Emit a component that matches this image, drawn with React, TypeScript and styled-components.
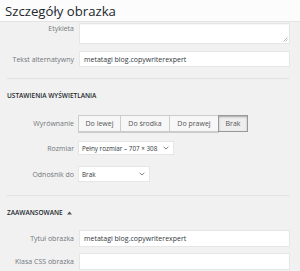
import React from "react";
import styled, { createGlobalStyle } from "styled-components";

const Global = createGlobalStyle`
  html, body { margin: 0; padding: 0; background: #f1f1f1; }
  body { font-family: "Open Sans", "Noto Sans", sans-serif; color: #444; }
  * { box-sizing: border-box; }
`;

const Page = styled.div`
  width: 300px;
  height: 271px;
  overflow: hidden;
  background: #f1f1f1;
`;

const Header = styled.div`
  height: 22px;
  background: #fcfcfc;
  border-bottom: 1px solid #e3e3e3;
  padding-left: 5px;
  display: flex;
  align-items: center;
`;

const Title = styled.h1`
  margin: 0;
  font-size: 13.2px;
  font-weight: 500;
  color: #23282d;
`;

const Body = styled.div`
  padding: 0 10px 0 7px;
  display: flex;
  flex-direction: column;
`;

const Row = styled.div<{ $mt: number; $align?: string }>`
  display: grid;
  grid-template-columns: 67px 1fr;
  column-gap: 4px;
  align-items: ${(p) => p.$align || "center"};
  margin-top: ${(p) => p.$mt}px;
`;

const Label = styled.label<{ $pt?: number }>`
  text-align: right;
  font-size: 7px;
  color: #72777c;
  padding-top: ${(p) => p.$pt || 0}px;
  white-space: nowrap;
`;

const TextArea = styled.div`
  position: relative;
  height: 21px;
  margin-left: 1px;
  background: #fff;
  border: 1px solid #e6e6e6;
  box-shadow: inset 0 1px 1px rgba(0, 0, 0, 0.04);
`;

const Grip = styled.svg`
  position: absolute;
  right: 1px;
  bottom: 1px;
`;

const Input = styled.div<{ $h: number }>`
  height: ${(p) => p.$h}px;
  margin-left: 1px;
  background: #fff;
  border: 1px solid #e6e6e6;
  display: flex;
  align-items: center;
  padding-left: 4px;
  font-size: 7px;
  color: #32373c;
`;

const Separator = styled.hr<{ $mt: number }>`
  margin: ${(p) => p.$mt}px 1px 0 0;
  border: 0;
  border-top: 1px solid #e2e2e2;
  height: 0;
`;

const Heading = styled.h2<{ $mt: number }>`
  margin: ${(p) => p.$mt}px 0 0;
  font-size: 6.5px;
  font-weight: 600;
  color: #23282d;
  text-transform: uppercase;
  display: flex;
  align-items: center;
  gap: 4px;
  line-height: 9px;
`;

const ButtonGroup = styled.div`
  display: flex;
  height: 17px;
`;

const SegButton = styled.button<{ $w: number; $active?: boolean }>`
  width: ${(p) => p.$w}px;
  height: 17px;
  margin: 0 0 0 -1px;
  padding: 0;
  font-family: inherit;
  font-size: 7px;
  color: #555;
  background: ${(p) => (p.$active ? "#eee" : "#f7f7f7")};
  border: 1px solid ${(p) => (p.$active ? "#999" : "#ccc")};
  box-shadow: ${(p) =>
    p.$active ? "inset 0 1px 2px rgba(0,0,0,0.3)" : "0 1px 0 #ccc"};
  position: relative;
  z-index: ${(p) => (p.$active ? 1 : 0)};
  &:first-child { margin-left: 0; }
`;

const Select = styled.div<{ $w: number; $h: number }>`
  width: ${(p) => p.$w}px;
  height: ${(p) => p.$h}px;
  background: #fff;
  border: 1px solid #e6e6e6;
  display: flex;
  align-items: center;
  justify-content: space-between;
  padding: 0 4px 0 3px;
  font-size: 6.3px;
  color: #32373c;
`;

const Chevron = () => (
  <svg width="6" height="4" viewBox="0 0 6 4">
    <path d="M0.6 0.8 L3 3 L5.4 0.8" fill="none" stroke="#777" strokeWidth="0.9" />
  </svg>
);

export default function App() {
  return (
    <Page>
      <Global />
      <Header>
        <Title>Szczegóły obrazka</Title>
      </Header>
      <Body>
        <Row $mt={1} $align="start">
          <Label $pt={1}>Etykieta</Label>
          <TextArea>
            <Grip width="5" height="5" viewBox="0 0 5 5">
              <path d="M4.5 0.5 L0.5 4.5 M4.5 2.5 L2.5 4.5" stroke="#aaa" strokeWidth="0.8" />
            </Grip>
          </TextArea>
        </Row>
        <Row $mt={7}>
          <Label>Tekst alternatywny</Label>
          <Input $h={16}>metatagi blog.copywriterexpert</Input>
        </Row>
        <Separator $mt={11} />
        <Heading $mt={12}>Ustawienia wyświetlania</Heading>
        <Row $mt={15}>
          <Label>Wyrównanie</Label>
          <ButtonGroup>
            <SegButton $w={43}>Do lewej</SegButton>
            <SegButton $w={50}>Do środka</SegButton>
            <SegButton $w={50}>Do prawej</SegButton>
            <SegButton $w={30} $active>
              Brak
            </SegButton>
          </ButtonGroup>
        </Row>
        <Row $mt={9}>
          <Label>Rozmiar</Label>
          <Select $w={96} $h={14}>
            <span>Pełny rozmiar – 707 × 308</span>
            <Chevron />
          </Select>
        </Row>
        <Row $mt={11}>
          <Label>Odnośnik do</Label>
          <Select $w={72} $h={16}>
            <span>Brak</span>
            <Chevron />
          </Select>
        </Row>
        <Separator $mt={13} />
        <Heading $mt={12}>
          Zaawansowane
          <svg width="5" height="4" viewBox="0 0 5 4">
            <path d="M0 3.5 L2.5 0.5 L5 3.5 Z" fill="#555" />
          </svg>
        </Heading>
        <Row $mt={13}>
          <Label>Tytuł obrazka</Label>
          <Input $h={17}>metatagi blog.copywriterexpert</Input>
        </Row>
        <Row $mt={6}>
          <Label>Klasa CSS obrazka</Label>
          <Input $h={17} />
        </Row>
      </Body>
    </Page>
  );
}
